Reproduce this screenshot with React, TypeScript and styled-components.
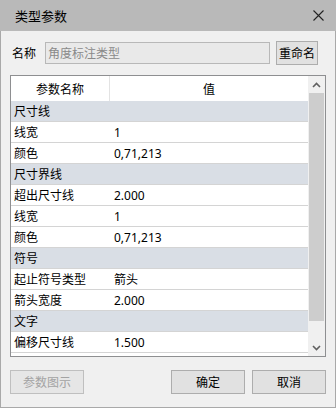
import React from "react";
import styled, { createGlobalStyle } from "styled-components";

const Global = createGlobalStyle`
  html, body { margin: 0; padding: 0; background: #f0f0f0; }
  body { font-family: "Noto Sans", "Noto Sans CJK SC", sans-serif; font-size: 12px; color: #000; }
  * { box-sizing: border-box; }
`;

const Window = styled.div`
  width: 336px;
  height: 408px;
  display: flex;
  flex-direction: column;
  background: #f0f0f0;
`;

const TitleBar = styled.div`
  height: 31px;
  flex: none;
  background: #b9b9b9;
  display: flex;
  align-items: center;
  justify-content: space-between;
  padding: 0 12px 0 15px;
  font-size: 13px;
  color: #000;
`;

const CloseBtn = styled.div`
  width: 12px;
  height: 12px;
  display: flex;
  align-items: center;
  justify-content: center;
`;

const Body = styled.div`
  flex: 1;
  display: flex;
  flex-direction: column;
  border: 1px solid #a9a9a9;
  border-top: none;
  padding: 10px 9px 13px 9px;
`;

const NameRow = styled.div`
  height: 24px;
  display: flex;
  align-items: center;
`;

const Label = styled.span`
  width: 35px;
  padding-left: 2px;
  font-size: 12px;
`;

const NameInput = styled.div`
  width: 225px;
  height: 22px;
  border: 1px solid #b8b8b8;
  background: #e9e9e9;
  color: #8a8a8a;
  padding-left: 2px;
  display: flex;
  align-items: center;
  font-size: 12px;
`;

const Button = styled.div<{ $w: number; $disabled?: boolean }>`
  width: ${(p) => p.$w}px;
  height: 24px;
  border: 1px solid ${(p) => (p.$disabled ? "#bfbfbf" : "#adadad")};
  background: ${(p) => (p.$disabled ? "#e6e6e6" : "#e1e1e1")};
  color: ${(p) => (p.$disabled ? "#a3a3a3" : "#000")};
  display: flex;
  align-items: center;
  justify-content: center;
  font-size: 12px;
`;

const RenameButton = styled(Button)`
  margin-left: 6px;
`;

const Table = styled.div`
  margin-top: 10px;
  height: 282px;
  border: 1px solid #8e8f91;
  background: #fff;
  display: flex;
  overflow: hidden;
`;

const Grid = styled.div`
  flex: 1;
  display: flex;
  flex-direction: column;
  overflow: hidden;
`;

const HeaderRow = styled.div`
  height: 25px;
  flex: none;
  display: grid;
  grid-template-columns: 99px 1fr;
  background: #fff;
`;

const HeaderCell = styled.div<{ $sep?: boolean }>`
  display: flex;
  align-items: center;
  justify-content: center;
  font-size: 12px;
  border-right: ${(p) => (p.$sep ? "1px solid #e3e3e3" : "none")};
`;

const Row = styled.div<{ $group?: boolean }>`
  height: 21px;
  flex: none;
  display: grid;
  grid-template-columns: 100px 1fr;
  align-items: center;
  background: ${(p) => (p.$group ? "#d9dee5" : "#fff")};
  border-bottom: 1px solid #d4d4d4;
  font-size: 12px;
`;

const Cell = styled.div`
  padding-left: 3px;
  white-space: nowrap;
`;

const Scrollbar = styled.div`
  width: 17px;
  flex: none;
  background: #f0f0f0;
  display: flex;
  flex-direction: column;
`;

const Arrow = styled.div`
  height: 17px;
  flex: none;
  display: flex;
  align-items: center;
  justify-content: center;
`;

const Track = styled.div`
  flex: 1;
  display: flex;
  flex-direction: column;
`;

const Thumb = styled.div`
  height: 228px;
  margin: 0 1px;
  background: #cdcdcd;
`;

const Footer = styled.div`
  margin-top: 13px;
  display: flex;
  gap: 7px;
`;

const Spacer = styled.div`
  flex: 1;
`;

type R = { name: string; value?: string; group?: boolean };

const rows: R[] = [
  { name: "尺寸线", group: true },
  { name: "线宽", value: "1" },
  { name: "颜色", value: "0,71,213" },
  { name: "尺寸界线", group: true },
  { name: "超出尺寸线", value: "2.000" },
  { name: "线宽", value: "1" },
  { name: "颜色", value: "0,71,213" },
  { name: "符号", group: true },
  { name: "起止符号类型", value: "箭头" },
  { name: "箭头宽度", value: "2.000" },
  { name: "文字", group: true },
  { name: "偏移尺寸线", value: "1.500" },
  { name: "", value: "" },
];

export default function App() {
  return (
    <>
      <Global />
      <Window>
        <TitleBar>
          <span>类型参数</span>
          <CloseBtn>
            <svg width="11" height="11" viewBox="0 0 11 11">
              <path d="M0.5 0.5 L10.5 10.5 M10.5 0.5 L0.5 10.5" stroke="#222" strokeWidth="1.1" />
            </svg>
          </CloseBtn>
        </TitleBar>
        <Body>
          <NameRow>
            <Label>名称</Label>
            <NameInput>角度标注类型</NameInput>
            <RenameButton $w={42}>重命名</RenameButton>
          </NameRow>
          <Table>
            <Grid>
              <HeaderRow>
                <HeaderCell $sep>参数名称</HeaderCell>
                <HeaderCell>值</HeaderCell>
              </HeaderRow>
              {rows.map((r, i) => (
                <Row key={i} $group={r.group}>
                  <Cell>{r.name}</Cell>
                  <Cell>{r.value}</Cell>
                </Row>
              ))}
            </Grid>
            <Scrollbar>
              <Arrow>
                <svg width="9" height="6" viewBox="0 0 9 6">
                  <path d="M1 5 L4.5 1.5 L8 5" stroke="#606060" strokeWidth="1.6" fill="none" />
                </svg>
              </Arrow>
              <Track>
                <Thumb />
              </Track>
              <Arrow>
                <svg width="9" height="6" viewBox="0 0 9 6">
                  <path d="M1 1 L4.5 4.5 L8 1" stroke="#606060" strokeWidth="1.6" fill="none" />
                </svg>
              </Arrow>
            </Scrollbar>
          </Table>
          <Footer>
            <Button $w={74} $disabled>参数图示</Button>
            <Spacer />
            <Button $w={74}>确定</Button>
            <Button $w={74}>取消</Button>
          </Footer>
        </Body>
      </Window>
    </>
  );
}
